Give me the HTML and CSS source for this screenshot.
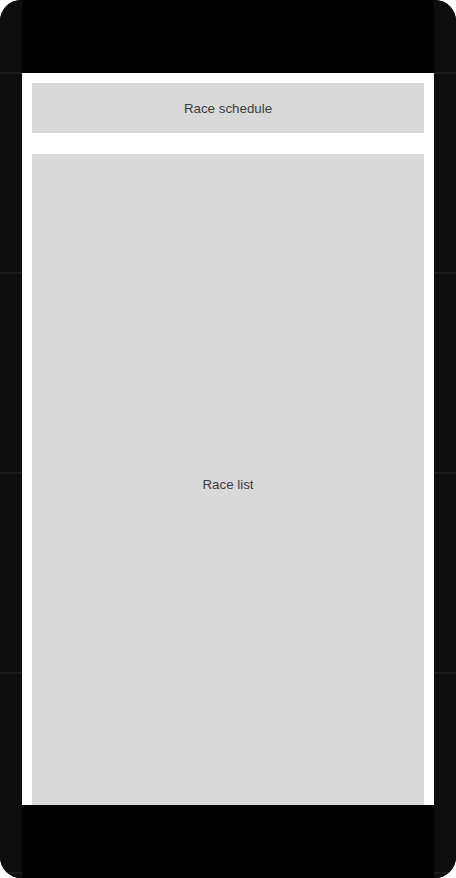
FILE: index.html
```html
<!DOCTYPE html>
<html lang="en">
<head>
<meta charset="utf-8">
<title>Race schedule</title>
<link rel="stylesheet" href="styles.css">
</head>
<body>
<div class="device">
  <div class="bezel"></div>
  <div class="center">
    <div class="screen">
      <div class="block block-header">Race schedule</div>
      <div class="block block-list">Race list</div>
    </div>
  </div>
  <div class="bezel"></div>
</div>
</body>
</html>
```
FILE: styles.css
```css
html, body {
  margin: 0;
  padding: 0;
  background: #ffffff;
}
.device {
  width: 456px;
  height: 878px;
  border-radius: 21px;
  overflow: hidden;
  background: #0d0d0d;
  display: grid;
  grid-template-columns: 22px 1fr 22px;
  font-family: "Liberation Sans", Arial, sans-serif;
}
.bezel {
  background: repeating-linear-gradient(
    to bottom,
    #0d0d0d 0px,
    #0d0d0d 72px,
    #1b1b1b 72px,
    #1b1b1b 74px,
    #0d0d0d 74px,
    #0d0d0d 200px
  );
}
.center {
  background: #000000;
  padding: 73px 0 73px;
  display: flex;
  flex-direction: column;
  min-height: 0;
}
.screen {
  flex: 1;
  min-height: 0;
  background: #ffffff;
  padding: 10px 10px 0;
  display: flex;
  flex-direction: column;
  gap: 21px;
  overflow: hidden;
}
.block {
  background: #d9d9d9;
  color: #3d3d3d;
  font-size: 13.33px;
  display: flex;
  align-items: center;
  justify-content: center;
  flex: none;
}
.block-header {
  height: 50px;
}
.block-list {
  height: 660px;
}
```
